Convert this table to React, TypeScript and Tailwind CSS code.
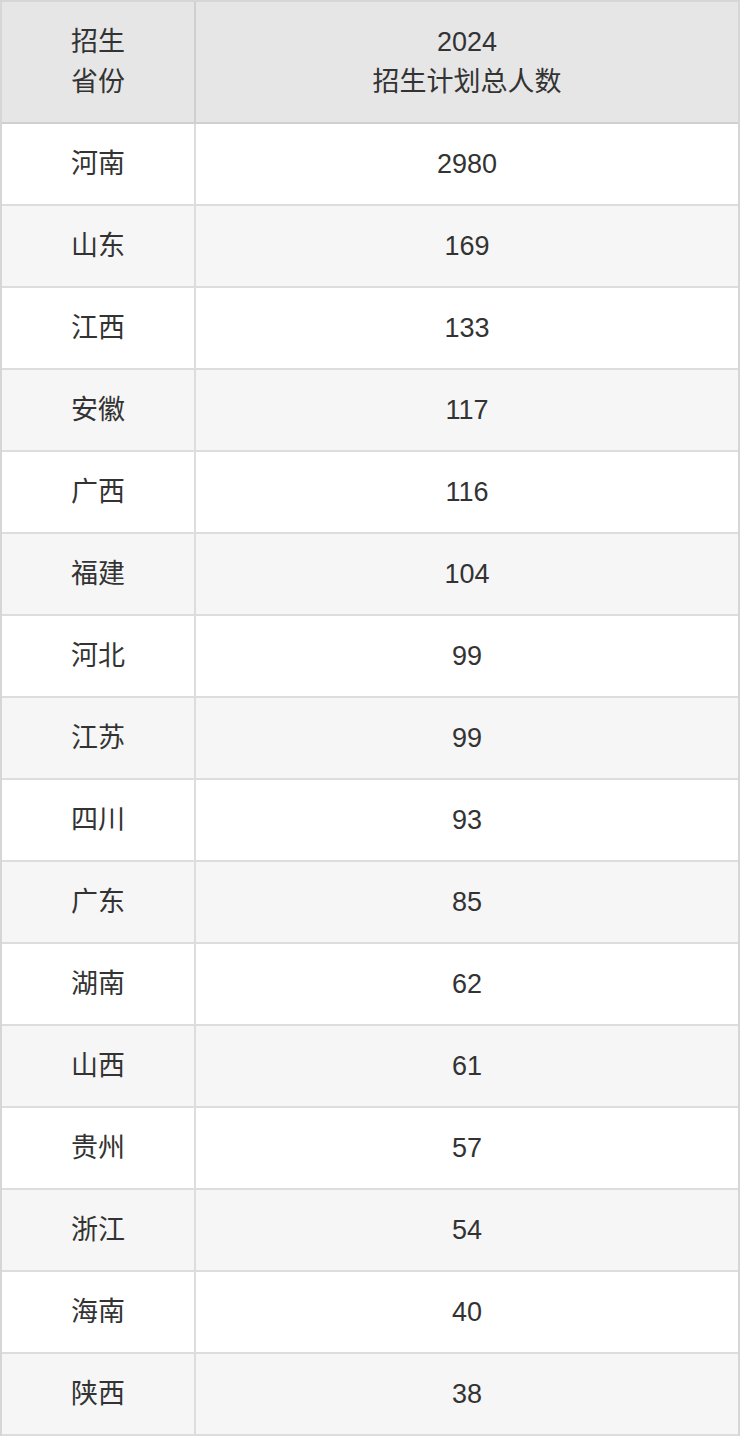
const ROWS = [
  ['河南', '2980'],
  ['山东', '169'],
  ['江西', '133'],
  ['安徽', '117'],
  ['广西', '116'],
  ['福建', '104'],
  ['河北', '99'],
  ['江苏', '99'],
  ['四川', '93'],
  ['广东', '85'],
  ['湖南', '62'],
  ['山西', '61'],
  ['贵州', '57'],
  ['浙江', '54'],
  ['海南', '40'],
  ['陕西', '38'],
] as const;

export default function App() {
  return (
    <div
      className="w-[740px] bg-white text-[27px] leading-[40px] text-[#333333]"
      style={{ fontFamily: '"Liberation Sans", "Noto Sans CJK SC", sans-serif' }}
    >
      <div className="border-x-2 border-t-2 border-[#d6d6d6]">
        <div className="flex h-[122px] border-b-2 border-[#d0d0d0] bg-[#e6e6e6]">
          <div className="flex w-[194px] shrink-0 items-center justify-center border-r-2 border-[#d0d0d0] text-center">
            招生
            <br />
            省份
          </div>
          <div className="flex flex-1 items-center justify-center text-center">
            2024
            <br />
            招生计划总人数
          </div>
        </div>

        {ROWS.map(([prov, num], i) => (
          <div
            key={prov}
            className={`flex h-[82px] border-b-2 border-[#dddddd] ${i % 2 === 0 ? 'bg-white' : 'bg-[#f6f6f6]'}`}
          >
            <div className="flex w-[194px] shrink-0 items-center justify-center border-r-2 border-[#dddddd]">
              {prov}
            </div>
            <div className="flex flex-1 items-center justify-center">{num}</div>
          </div>
        ))}
      </div>
    </div>
  );
}
